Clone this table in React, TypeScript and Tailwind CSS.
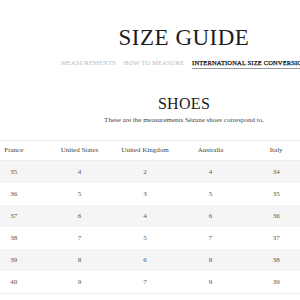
const headers = ['France', 'United States', 'United Kingdom', 'Australia', 'Italy'];

const rows = [
  ['35', '4', '2', '4', '34'],
  ['36', '5', '3', '5', '35'],
  ['37', '6', '4', '6', '36'],
  ['38', '7', '5', '7', '37'],
  ['39', '8', '6', '8', '38'],
  ['40', '9', '7', '9', '39'],
];

export default function App() {
  return (
    <div className="w-[300px] h-[300px] overflow-hidden bg-white font-['Liberation_Serif',serif]">
      <div className="w-[368px]">
        <h1 className="pt-[24px] text-center text-[23px] leading-[28px] tracking-[0.5px] text-[#1c1c1c]">
          SIZE GUIDE
        </h1>
        <div className="mt-[6px] flex justify-center gap-[8px] text-[6.5px] leading-[9px] tracking-[0.15px] whitespace-nowrap">
          <span className="text-[#b9b9b9] pb-[2px]">MEASUREMENTS</span>
          <span className="text-[#b9b9b9] pb-[2px]">HOW TO MEASURE</span>
          <span className="text-[#111] [-webkit-text-stroke:0.25px_#111] pb-[1px] border-b-[1.5px] border-[#9a9a9a]">
            INTERNATIONAL SIZE CONVERSION
          </span>
        </div>
        <h2 className="mt-[25px] text-center text-[16px] leading-[20px] tracking-[0.3px] text-[#1c1c1c]">
          SHOES
        </h2>
        <p className="mt-[1px] text-center text-[7px] leading-[10px] text-[#444]">
          These are the measurements Sézane shoes correspond to.
        </p>
      </div>
      <div className="mt-[15px] ml-[-19px] w-[328px] text-[7px] text-[#555]">
        <div className="grid grid-cols-5 h-[21px] items-center border-t border-b border-[#ececec] text-[#444]">
          {headers.map((h) => (
            <div key={h} className="text-center whitespace-nowrap">{h}</div>
          ))}
        </div>
        {rows.map((r, i) => (
          <div
            key={i}
            className={`grid grid-cols-5 h-[22px] items-center ${i % 2 === 0 ? 'bg-[#f5f5f5]' : 'bg-white'}`}
          >
            {r.map((v, j) => (
              <div key={j} className="text-center">{v}</div>
            ))}
          </div>
        ))}
        <div className="border-t border-[#ececec]" />
      </div>
    </div>
  );
}
